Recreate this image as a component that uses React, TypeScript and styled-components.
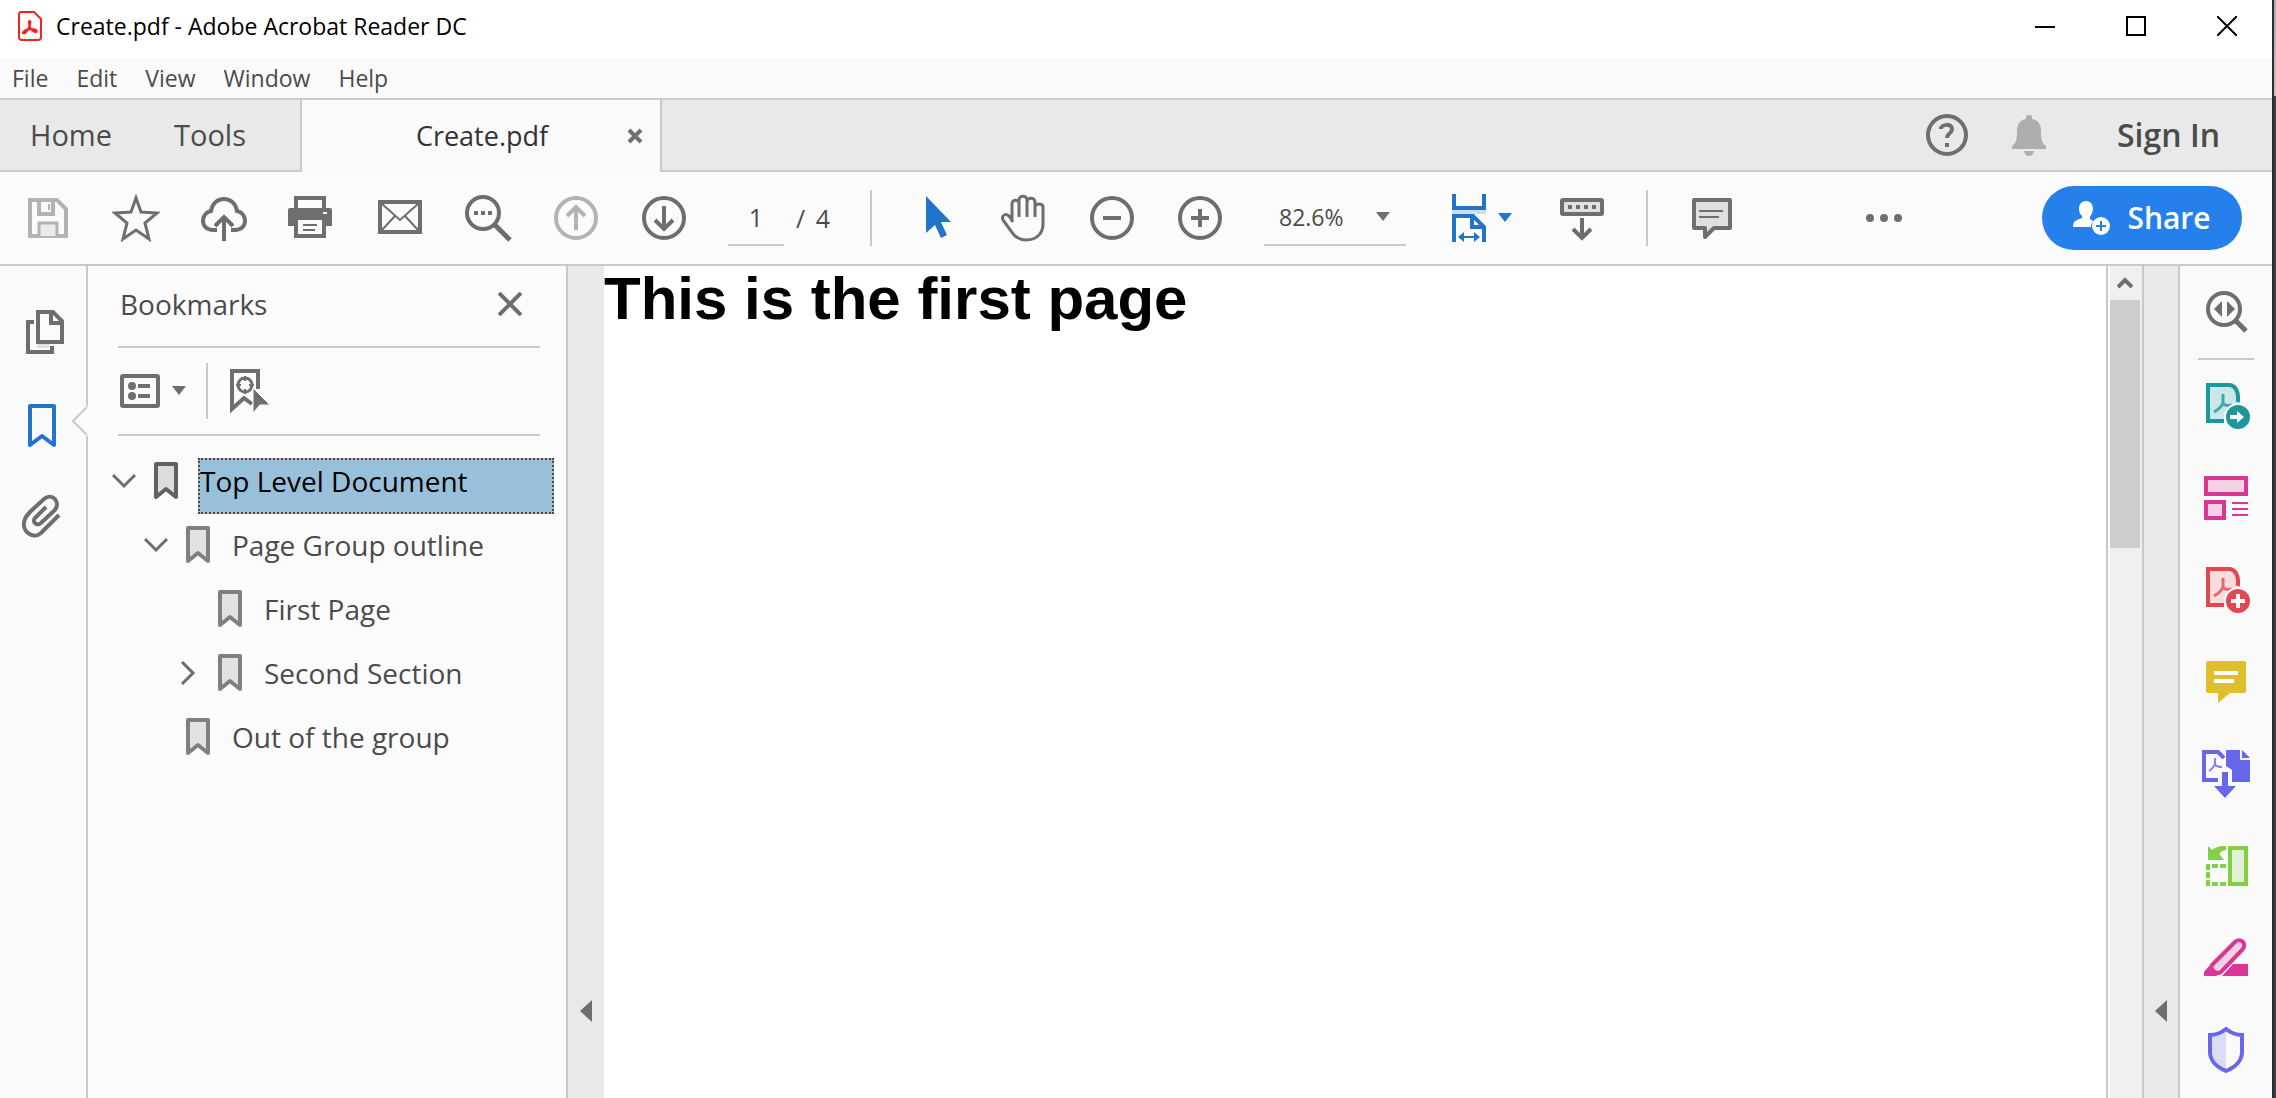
import React, { useState } from "react";
import styled, { createGlobalStyle, css } from "styled-components";

const color = {
  line: "#c9c9c9",
  chrome: "#fafafa",
  well: "#e9e9e9",
  icon: "#6e6e6e",
  iconOff: "#b3b3b3",
  text: "#4b4b4b",
  blue: "#2074ca",
  share: "#2680eb",
  select: "#99c0da",
  teal: "#1d979c",
  pink: "#da3795",
  red: "#e34850",
  yellow: "#dfbf2b",
  violet: "#6767ec",
  green: "#84d045",
};

const GlobalStyle = createGlobalStyle`
  * { box-sizing: border-box; }
  body {
    margin: 0;
    background: #ffffff;
    color: ${color.text};
    font-family: "Open Sans", "Noto Sans", sans-serif;
  }
  button, input, select { font: inherit; color: inherit; }
`;

/* ---------- frame ---------- */

const Desktop = styled.div`
  display: flex;
  height: 100vh;
  overflow: hidden;
`;

const Window = styled.div`
  display: flex;
  flex: 1;
  flex-direction: column;
  min-width: 0;
`;

const DesktopEdge = styled.div`
  width: 4px;
  border-left: 2px solid #2c2f31;
  background: linear-gradient(#a9adb2 0, #c4c4c4 96px, #3b4144 96px);
`;

const BareButton = styled.button`
  display: flex;
  align-items: center;
  justify-content: center;
  padding: 0;
  border: 0;
  background: none;
  cursor: pointer;
`;

/* ---------- title and menu ---------- */

const TitleBar = styled.header`
  display: flex;
  align-items: center;
  flex: 0 0 58px;
  padding: 0 0 6px 16px;
`;

const Title = styled.h1`
  flex: 1;
  margin: 0 0 0 12px;
  color: #000000;
  font-size: 23px;
  font-weight: 400;
  line-height: 32px;
`;

const CaptionButton = styled(BareButton)`
  width: 91px;
  height: 52px;
`;

const MenuBar = styled.nav`
  display: flex;
  align-items: center;
  flex: 0 0 42px;
  gap: 28px;
  padding: 0 12px;
  border-bottom: 2px solid ${color.line};
  background: ${color.chrome};
`;

const MenuItem = styled(BareButton)`
  font-size: 23px;
  line-height: 32px;
`;

/* ---------- tabs ---------- */

const TabBar = styled.div`
  display: flex;
  flex: 0 0 72px;
  background: ${color.well};
`;

const TabGroup = styled.div<{ $end?: boolean }>`
  display: flex;
  align-items: center;
  border-bottom: 2px solid ${color.line};
  ${(p) =>
    p.$end
      ? css`
          flex: 1;
          justify-content: flex-end;
          gap: 34px;
          padding-right: 52px;
        `
      : css`
          width: 300px;
          gap: 62px;
          padding-left: 30px;
        `}
`;

const TabButton = styled(BareButton)`
  font-size: 29px;
  line-height: 40px;
`;

const SignInButton = styled(BareButton)`
  padding-left: 30px;
  font-size: 32px;
  font-weight: 600;
  line-height: 40px;
`;

const OpenTab = styled.div`
  display: flex;
  align-items: center;
  width: 362px;
  padding: 0 16px 0 36px;
  border: solid ${color.line};
  border-width: 0 2px;
  background: ${color.chrome};
  color: #323232;
  font-size: 27px;
  line-height: 40px;
`;

const OpenTabName = styled.span`
  flex: 1;
  text-align: center;
`;

/* ---------- toolbar ---------- */

const Toolbar = styled.div`
  display: flex;
  align-items: center;
  flex: 0 0 94px;
  padding: 0 30px 0 4px;
  border-bottom: 2px solid ${color.line};
  background: #fbfbfb;
`;

const ToolButton = styled(BareButton)`
  flex: 0 0 88px;
  height: 64px;
`;

const FitButton = styled(BareButton)`
  gap: 12px;
  height: 64px;
  margin: 0 4px 0 46px;
  padding-right: 22px;
`;

const Divider = styled.span`
  width: 2px;
  height: 56px;
  margin: 0 20px;
  background: ${color.line};
`;

const PageField = styled.label`
  display: flex;
  align-items: center;
  gap: 12px;
  margin: 0 20px;
  font-size: 25px;
  line-height: 32px;
`;

const PageInput = styled.input`
  width: 56px;
  height: 56px;
  padding: 0;
  border: 0;
  border-bottom: 2px solid ${color.line};
  background: none;
  text-align: center;
`;

const PageCount = styled.span`
  display: flex;
  justify-content: space-between;
  width: 34px;
`;

const ZoomField = styled.label`
  display: flex;
  align-items: center;
  width: 142px;
  height: 56px;
  margin-left: 20px;
  padding-right: 16px;
  border-bottom: 2px solid ${color.line};
`;

const ZoomSelect = styled.select`
  flex: 1;
  min-width: 0;
  padding: 0 0 0 15px;
  border: 0;
  background: none;
  appearance: none;
  font-size: 23px;
  line-height: 32px;
`;

const MoreSlot = styled.div`
  display: flex;
  flex: 1;
  justify-content: space-between;
  align-items: center;
  padding-left: 84px;
`;

const ShareButton = styled(BareButton)`
  gap: 16px;
  width: 200px;
  height: 64px;
  border-radius: 32px;
  background: ${color.share};
  color: #ffffff;
  font-size: 30px;
  font-weight: 600;
  line-height: 40px;
`;

/* ---------- body ---------- */

const Body = styled.div`
  display: flex;
  flex: 1;
  min-height: 0;
`;

const Rail = styled.nav<{ $side: "left" | "right" }>`
  display: flex;
  flex-direction: column;
  align-items: center;
  background: ${color.chrome};
  ${(p) =>
    p.$side === "left"
      ? css`
          width: 88px;
          padding-top: 20px;
          border-right: 2px solid ${color.line};
        `
      : css`
          width: 94px;
          border-left: 2px solid ${color.line};
        `}
`;

const RailButton = styled(BareButton)`
  position: relative;
  flex: 0 0 92px;
  width: 100%;
`;

const RailRule = styled.span`
  flex: 0 0 2px;
  width: 56px;
  background: ${color.line};
`;

const Notch = styled.svg`
  position: absolute;
  right: -2px;
  top: 28px;
`;

const Panel = styled.aside`
  display: flex;
  flex-direction: column;
  width: 480px;
  padding: 0 12px 0 24px;
  border-right: 2px solid ${color.line};
  background: #fbfbfb;
`;

const PanelRow = styled.div`
  display: flex;
  align-items: center;
  margin: 0 14px 0 6px;
  padding-left: 2px;
  border-bottom: 2px solid ${color.line};
`;

const PanelHead = styled(PanelRow)`
  flex: 0 0 82px;
  justify-content: space-between;
  padding: 0 18px 4px 2px;
`;

const PanelTools = styled(PanelRow)`
  flex: 0 0 88px;
`;

const PanelTitle = styled.h2`
  margin: 0;
  font-size: 28px;
  font-weight: 400;
  line-height: 40px;
`;

const OptionsButton = styled(BareButton)`
  gap: 12px;
`;

const Tree = styled.ul`
  margin: 0;
  padding: 13px 0 0;
  list-style: none;
`;

const TreeRow = styled.li<{ $level: number }>`
  display: flex;
  align-items: center;
  height: 64px;
  padding-left: ${(p) => p.$level * 32}px;
`;

const Twisty = styled(BareButton)`
  width: 24px;
  height: 24px;
  margin-right: 18px;
`;

const TwistySpace = styled.span`
  width: 42px;
`;

const TreeLabel = styled.button<{ $selected: boolean }>`
  flex: 1;
  height: 56px;
  margin: 10px 0 0 20px;
  padding: 0 0 10px;
  border: 2px dotted ${(p) => (p.$selected ? "#6b4028" : "transparent")};
  background: ${(p) => (p.$selected ? color.select : "transparent")};
  color: ${(p) => (p.$selected ? "#000000" : color.text)};
  font-size: 28px;
  line-height: 40px;
  text-align: left;
  cursor: pointer;
`;

const Collapser = styled(BareButton)<{ $wide?: boolean }>`
  flex: 0 0 ${(p) => (p.$wide ? 36 : 34)}px;
  align-items: flex-end;
  padding-bottom: 76px;
  background: ${color.well};
`;

const Document = styled.main`
  flex: 1;
  min-width: 0;
  border-right: 2px solid ${color.line};
  background: #ffffff;
`;

const Heading = styled.h2`
  margin: 0;
  color: #000000;
  font: bold 60px/66px "Liberation Sans", Arial, sans-serif;
`;

const ScrollTrack = styled.div`
  width: 36px;
  padding-right: 2px;
  border: solid ${color.line};
  border-width: 0 2px 0 0;
  border-left: 2px solid #ffffff;
  background: #f0f0f0;
`;

const ScrollUp = styled(BareButton)`
  width: 30px;
  height: 34px;
`;

const ScrollThumb = styled.div`
  width: 30px;
  height: 248px;
  background: #cdcdcd;
`;

/* ---------- drawings ---------- */

type IconProps = {
  size?: number;
  stroke?: string;
  width?: number;
  children: React.ReactNode;
};

const Icon = ({ size = 48, stroke = color.icon, width = 4, children }: IconProps) => (
  <svg
    width={size}
    height={size}
    viewBox={`0 0 ${size} ${size}`}
    fill="none"
    stroke={stroke}
    strokeWidth={width}
    aria-hidden="true"
  >
    {children}
  </svg>
);

const Caret = ({ fill = color.icon }: { fill?: string }) => (
  <svg width="14" height="10" viewBox="0 0 14 10" fill={fill} aria-hidden="true">
    <path d="M0 0h14L7 9z" />
  </svg>
);

const CollapseMark = () => (
  <svg width="12" height="22" viewBox="0 0 12 22" fill={color.icon} aria-hidden="true">
    <path d="M12 0v22L0 11z" />
  </svg>
);

const SaveIcon = () => (
  <Icon stroke={color.iconOff}>
    <path d="M6 6h27l9 9v27H6z" />
    <path d="M15 6v14h14V6" />
    <path d="M25 10v6" strokeWidth="2" />
    <path d="M15 42V29h18v13" fill="#ebebeb" strokeWidth="3" />
  </Icon>
);
const StarIcon = () => (
  <Icon width={3}>
    <path d="M24 4L29 18 45 19 33 29 37 45 24 36 11 45 15 29 3 19 19 18z" />
  </Icon>
);
const CloudIcon = () => (
  <Icon>
    <path d="M17 36h-4C7 36 3 32 3 27s3-9 8-10C12 10 17 5 24 5s12 5 13 12c5 1 8 5 8 10s-4 9-10 9h-4" />
    <path d="M24 47V24M15 32l9-9 9 9" />
  </Icon>
);
const PrintIcon = () => (
  <Icon>
    <path d="M8 16V4h28v12" />
    <path d="M2 14h40q2 0 2 2v16H0V16q0-2 2-2z" fill={color.icon} stroke="none" />
    <path d="M8 24h28v18H8z" fill="#fbfbfb" />
    <path d="M15 31h14M15 36h12" strokeWidth="2" />
    <path d="M35 19h4" stroke="#fbfbfb" strokeWidth="2" />
  </Icon>
);
const MailIcon = () => (
  <Icon>
    <path d="M4 8h40v30H4z" />
    <path d="M5 9l19 17L43 9M5 37l14-15M43 37L29 22" strokeWidth="2" />
  </Icon>
);
const FindIcon = () => (
  <Icon>
    <circle cx="19" cy="19" r="16" />
    <path d="M31 31l15 15" strokeWidth="5" />
    <path d="M10 19h4m3 0h4m3 0h4" />
  </Icon>
);
const ArrowCircle = ({ up }: { up?: boolean }) => (
  <Icon stroke={up ? color.iconOff : color.icon}>
    <circle cx="24" cy="24" r="20" />
    <path d={up ? "M24 36V14M15 22l9-9 9 9" : "M24 12v22M15 26l9 9 9-9"} />
  </Icon>
);
const CursorIcon = () => (
  <Icon stroke="none">
    <path d="M14 2l25 26h-10l6 13-6 3-6-13-9 8z" fill={color.blue} />
  </Icon>
);
const HandIcon = () => (
  <Icon width={3}>
    <path d="M12 28V10c0-5 7-5 7 0v13M19 11V6c0-5 8-5 8 0v17M27 8c0-5 8-5 8 0v15M35 13c0-4 8-4 8 0v17c0 10-7 16-17 16-8 0-12-4-15-9L3 26c-2-5 3-7 6-4l4 6" />
  </Icon>
);
const ZoomCircle = ({ plus }: { plus?: boolean }) => (
  <Icon>
    <circle cx="24" cy="24" r="20" />
    <path d={plus ? "M15 24h18M24 15v18" : "M15 24h18"} />
  </Icon>
);
const FitIcon = () => (
  <svg width="34" height="48" viewBox="0 0 34 48" fill="none" stroke={color.blue} strokeWidth="4" aria-hidden="true">
    <path d="M2 0v14h30V0" />
    <path d="M0 18h34" stroke="#cfdff1" />
    <path d="M2 48V22h19l11 11v15" />
    <path d="M20 22v11h12" />
    <path d="M8 43h18" strokeWidth="2" />
    <path d="M6 43l6-5v10zM28 43l-6-5v10z" fill={color.blue} stroke="none" />
  </svg>
);
const KeyboardIcon = () => (
  <Icon>
    <rect x="4" y="6" width="40" height="14" rx="1" fill="#e0e0e0" />
    <path d="M10 13h4m4 0h4m4 0h4m4 0h4" />
    <path d="M24 24v20M15 35l9 9 9-9" />
  </Icon>
);
const CommentIcon = () => (
  <Icon>
    <path d="M6 6h36v28H26l-9 9v-9H6z" fill="#e0e0e0" strokeLinejoin="round" />
    <path d="M11 17h24M11 23h20" strokeWidth="2" />
  </Icon>
);
const MoreIcon = () => (
  <Icon stroke="none">
    <g fill={color.icon}>
      <circle cx="10" cy="24" r="4" />
      <circle cx="24" cy="24" r="4" />
      <circle cx="38" cy="24" r="4" />
    </g>
  </Icon>
);
const ShareIcon = () => (
  <svg width="38" height="36" viewBox="0 0 38 36" fill="#ffffff" aria-hidden="true">
    <path d="M13 1c5 0 7 4 7 8 0 3-2 6-3 8v2c1 1 3 2 4 2-3 2-3 4-3 6H0c0-6 3-7 9-9v-2C7 14 6 12 6 9c0-4 2-8 7-8z" />
    <circle cx="28" cy="26" r="9" />
    <path d="M23 26h10M28 21v10" stroke={color.share} strokeWidth="2" />
  </svg>
);
const HelpIcon = () => (
  <Icon>
    <circle cx="24" cy="24" r="19" />
    <path d="M18 18c0-5 11-6 11 0 0 5-5 4-5 9M24 32v4" />
  </Icon>
);
const BellIcon = () => (
  <Icon stroke="none">
    <path d="M21 6q0-2 3-2t3 2v2c6 1 9 5 9 12 0 9 1 12 5 15v3H7v-3c4-3 5-6 5-15 0-7 3-11 9-12zM19 40h10q-1 5-5 5t-5-5z" fill="#aeaeae" />
  </Icon>
);
const PdfFileIcon = () => (
  <svg width="28" height="32" viewBox="0 0 28 32" fill="none" stroke="#f8221a" strokeWidth="2" aria-hidden="true">
    <path d="M5 2h13l7 7v18q0 3-3 3H6q-3 0-3-3V5q0-3 2-3z" />
    <path d="M14 11c-2 0-1 4 0 6 1 3 4 5 6 5 2-1 0-3-5-3-4 0-8 2-8 4 2 2 5-3 6-6 1-2 2-6 1-6z" />
  </svg>
);

const PagesIcon = () => (
  <Icon>
    <path d="M15 14H9v30h24v-6" />
    <path d="M19 4h15l9 9v21H19z" fill="#fbfbfb" />
    <path d="M32 4v11h11" />
    <path d="M18 38h12" stroke="#e0e0e0" />
  </Icon>
);
const RailBookmarkIcon = () => (
  <Icon stroke={color.blue}>
    <path d="M11 6h24v39L23 36 11 45z" strokeLinejoin="round" />
  </Icon>
);
const ClipIcon = () => (
  <Icon>
    <path d="M40 23L22 41C14 48 1 39 6 27c1-3 3-5 6-8L25 7c8-7 17 3 11 11L22 31c-5 4-9-2-6-5l11-11" />
  </Icon>
);

const BookmarkIcon = ({ dark }: { dark?: boolean }) => (
  <svg width="24" height="38" viewBox="0 0 24 38" fill={dark ? "#dcdcdc" : "#e2e2e2"} stroke={dark ? "#616161" : "#808080"} strokeWidth="4" aria-hidden="true">
    <path d="M2 2h20v33l-10-8-10 8z" strokeLinejoin="round" />
  </svg>
);
const OptionsIcon = () => (
  <svg width="40" height="34" viewBox="0 0 40 34" fill="none" stroke={color.icon} strokeWidth="4" aria-hidden="true">
    <rect x="2" y="2" width="36" height="30" rx="1" />
    <path d="M18 12h12M18 22h12" />
    <circle cx="12" cy="12" r="4" fill={color.icon} stroke="none" />
    <circle cx="12" cy="22" r="4" fill={color.icon} stroke="none" />
  </svg>
);
const FindBookmarkIcon = () => (
  <Icon>
    <path d="M30 22V4H4v38l12-11 8 6" />
    <circle cx="17" cy="18" r="7" strokeWidth="3" />
    <path d="M17 9v5m0 8v5M8 18h5m8 0h5" strokeWidth="2" />
    <path d="M25 21l17 17H32l-7 8z" fill={color.icon} stroke="#fbfbfb" strokeWidth="1" />
  </Icon>
);
const Chevron = ({ open }: { open: boolean }) => (
  <Icon size={24} width={3}>
    <path d={open ? "M1 6l11 11L23 6" : "M6 1l11 11L6 23"} />
  </Icon>
);
const CloseIcon = () => (
  <Icon size={24}>
    <path d="M1 1l22 22M23 1L1 23" />
  </Icon>
);

const Badged = ({ tint, wash, children }: { tint: string; wash: string; children: React.ReactNode }) => (
  <Icon stroke={tint}>
    <path d="M22 39H6V3h23l9 9v9" fill={wash} stroke="none" />
    <path d="M22 39H6V3h22q9 2 8 17" />
    <path d="M21 12v9c-1 4-4 6-9 9M21 21c2 3 5 3 9 2" strokeWidth="3" opacity="0.8" />
    <circle cx="36" cy="35" r="13" fill={tint} stroke={color.chrome} strokeWidth="2" />
    {children}
  </Icon>
);
const ExportIcon = () => (
  <Badged tint={color.teal} wash="#cde7e8">
    <path d="M28 33h7v-4l7 6-7 6v-4h-7z" fill="#ffffff" stroke="none" />
  </Badged>
);
const CreateIcon = () => (
  <Badged tint={color.red} wash="#f8dcde">
    <path d="M29 35h14M36 28v14" stroke="#ffffff" />
  </Badged>
);
const FindToolIcon = () => (
  <Icon>
    <circle cx="22" cy="21" r="16" />
    <path d="M33 32l11 11" strokeWidth="5" />
    <path d="M20 13v16l-8-8zM25 13v16l8-8z" fill={color.icon} stroke="none" />
  </Icon>
);
const EditIcon = () => (
  <Icon stroke={color.pink}>
    <g fill="#f4d2e5">
      <rect x="4" y="4" width="40" height="16" />
      <rect x="4" y="28" width="18" height="16" />
    </g>
    <path d="M30 29h16M30 35h16M30 41h16" strokeWidth="2" />
  </Icon>
);
const NoteIcon = () => (
  <Icon stroke="none">
    <path d="M6 3h36q2 0 2 2v28q0 2-2 2H28L16 45V35H6q-2 0-2-2V5q0-2 2-2z" fill={color.yellow} />
    <path d="M12 15h24M12 23h20" stroke="#ffffff" strokeWidth="4" />
  </Icon>
);
const CombineIcon = () => (
  <Icon stroke={color.violet}>
    <path d="M16 30H2V2h14l6 6" />
    <path d="M13 8v6c-1 3-3 5-6 7M13 15c2 2 4 2 7 2" strokeWidth="2" opacity="0.8" />
    <path d="M24 0h14v10h10v22H30V20l-6-4zM40 0l8 8h-8z" fill={color.violet} stroke="none" />
    <path d="M20 22h6v14h8L23 48 12 36h8z" fill={color.violet} stroke="none" />
  </Icon>
);
const OrganizeIcon = () => (
  <Icon stroke={color.green}>
    <rect x="28" y="6" width="16" height="36" fill="#e3f0d8" />
    <path d="M4 24h4m2 0h6m2 0h6M4 42h4m2 0h6m2 0h6M6 22v6m0 2v6m0 2v6" />
    <path d="M6 4l4 4c5-4 9-4 14-4v4c-5 1-7 3-6 5l4 5H6z" fill={color.green} stroke="none" />
  </Icon>
);
const RedactIcon = () => (
  <Icon stroke={color.pink}>
    <path d="M10 31L33 8c5-5 12 1 8 7L19 38c-5 3-12-3-9-7z" fill="#f4d2e5" />
    <path d="M2 42v-4l5-6 9 9-2 1zM20 42l11-12h15v12z" fill={color.pink} stroke="none" />
  </Icon>
);
const ShieldIcon = () => (
  <Icon stroke={color.violet}>
    <path d="M24 3v42C14 40 8 34 8 26V9c7 0 11-2 16-6z" fill="#dcdcf8" stroke="none" />
    <path d="M24 3c5 4 9 6 16 6v17c0 8-6 15-16 19C14 41 8 34 8 26V9c7 0 11-2 16-6z" />
  </Icon>
);

/* ---------- data ---------- */

type Bookmark = { title: string; level: number; open?: boolean };

const bookmarks: Bookmark[] = [
  { title: "Top Level Document", level: 0, open: true },
  { title: "Page Group outline", level: 1, open: true },
  { title: "First Page", level: 2 },
  { title: "Second Section", level: 2, open: false },
  { title: "Out of the group", level: 1 },
];

const fileTools: [string, React.ReactNode][] = [
  ["Save", <SaveIcon />],
  ["Star", <StarIcon />],
  ["Upload", <CloudIcon />],
  ["Print", <PrintIcon />],
  ["Email", <MailIcon />],
  ["Find", <FindIcon />],
  ["Previous page", <ArrowCircle up />],
  ["Next page", <ArrowCircle />],
];

const viewTools: [string, React.ReactNode][] = [
  ["Select", <CursorIcon />],
  ["Pan", <HandIcon />],
  ["Zoom out", <ZoomCircle />],
  ["Zoom in", <ZoomCircle plus />],
];

const sideTools: [string, React.ReactNode][] = [
  ["Export PDF", <ExportIcon />],
  ["Edit PDF", <EditIcon />],
  ["Create PDF", <CreateIcon />],
  ["Comment", <NoteIcon />],
  ["Combine files", <CombineIcon />],
  ["Organize pages", <OrganizeIcon />],
  ["Redact", <RedactIcon />],
  ["Protect", <ShieldIcon />],
];

/* ---------- application ---------- */

export default function App() {
  const [selected, setSelected] = useState(0);
  const [page, setPage] = useState("1");

  return (
    <Desktop>
      <GlobalStyle />
      <Window>
        <TitleBar>
          <PdfFileIcon />
          <Title>Create.pdf - Adobe Acrobat Reader DC</Title>
          <CaptionButton aria-label="Minimize">
            <Icon size={20} stroke="#000" width={2}><path d="M0 11h20" /></Icon>
          </CaptionButton>
          <CaptionButton aria-label="Maximize">
            <Icon size={20} stroke="#000" width={2}><path d="M1 1h18v18H1z" /></Icon>
          </CaptionButton>
          <CaptionButton aria-label="Close">
            <Icon size={20} stroke="#000" width={2}><path d="M0 0l20 20M20 0L0 20" /></Icon>
          </CaptionButton>
        </TitleBar>

        <MenuBar>
          {["File", "Edit", "View", "Window", "Help"].map((name) => (
            <MenuItem key={name}>{name}</MenuItem>
          ))}
        </MenuBar>

        <TabBar>
          <TabGroup>
            <TabButton>Home</TabButton>
            <TabButton>Tools</TabButton>
          </TabGroup>
          <OpenTab>
            <OpenTabName>Create.pdf</OpenTabName>
            <BareButton aria-label="Close tab">
              <Icon size={18}><path d="M3 3l12 12M15 3L3 15" /></Icon>
            </BareButton>
          </OpenTab>
          <TabGroup $end>
            <BareButton aria-label="Help"><HelpIcon /></BareButton>
            <BareButton aria-label="Notifications"><BellIcon /></BareButton>
            <SignInButton>Sign In</SignInButton>
          </TabGroup>
        </TabBar>

        <Toolbar>
          {fileTools.map(([name, icon]) => (
            <ToolButton key={name} aria-label={name}>{icon}</ToolButton>
          ))}
          <PageField>
            <PageInput aria-label="Page number" value={page} onChange={(e) => setPage(e.target.value)} />
            <PageCount>
              <span>/</span>
              <span>4</span>
            </PageCount>
          </PageField>
          <Divider />
          {viewTools.map(([name, icon]) => (
            <ToolButton key={name} aria-label={name}>{icon}</ToolButton>
          ))}
          <ZoomField>
            <ZoomSelect aria-label="Zoom level">
              <option>82.6%</option>
            </ZoomSelect>
            <Caret />
          </ZoomField>
          <FitButton aria-label="Fit to width">
            <FitIcon />
            <Caret fill={color.blue} />
          </FitButton>
          <ToolButton aria-label="Read mode"><KeyboardIcon /></ToolButton>
          <Divider />
          <ToolButton aria-label="Add comment"><CommentIcon /></ToolButton>
          <MoreSlot>
            <ToolButton aria-label="More tools"><MoreIcon /></ToolButton>
            <ShareButton>
              <ShareIcon />
              Share
            </ShareButton>
          </MoreSlot>
        </Toolbar>

        <Body>
          <Rail $side="left" aria-label="Navigation panes">
            <RailButton aria-label="Page thumbnails"><PagesIcon /></RailButton>
            <RailButton aria-label="Bookmarks">
              <RailBookmarkIcon />
              <Notch width="16" height="30" viewBox="0 0 16 30" fill="#fbfbfb" stroke={color.line} strokeWidth="2" aria-hidden="true">
                <path d="M14 0h2v30h-2z" stroke="none" />
                <path d="M15 1L1 15l14 14" />
              </Notch>
            </RailButton>
            <RailButton aria-label="Attachments"><ClipIcon /></RailButton>
          </Rail>

          <Panel>
            <PanelHead>
              <PanelTitle>Bookmarks</PanelTitle>
              <BareButton aria-label="Close panel"><CloseIcon /></BareButton>
            </PanelHead>
            <PanelTools>
              <OptionsButton aria-label="Options">
                <OptionsIcon />
                <Caret />
              </OptionsButton>
              <Divider />
              <BareButton aria-label="Find current bookmark"><FindBookmarkIcon /></BareButton>
            </PanelTools>
            <Tree>
              {bookmarks.map((b, i) => (
                <TreeRow key={b.title} $level={b.level}>
                  {b.open === undefined ? (
                    <TwistySpace />
                  ) : (
                    <Twisty aria-label={b.open ? "Collapse" : "Expand"}>
                      <Chevron open={b.open} />
                    </Twisty>
                  )}
                  <BookmarkIcon dark={i === selected} />
                  <TreeLabel $selected={i === selected} onClick={() => setSelected(i)}>
                    {b.title}
                  </TreeLabel>
                </TreeRow>
              ))}
            </Tree>
          </Panel>

          <Collapser $wide aria-label="Hide navigation pane"><CollapseMark /></Collapser>

          <Document>
            <Heading>This is the first page</Heading>
          </Document>

          <ScrollTrack>
            <ScrollUp aria-label="Scroll up">
              <Icon size={16} width={4}><path d="M1 12l7-7 7 7" /></Icon>
            </ScrollUp>
            <ScrollThumb />
          </ScrollTrack>

          <Collapser aria-label="Hide tools pane"><CollapseMark /></Collapser>

          <Rail $side="right" aria-label="Tools">
            <RailButton aria-label="Search tools"><FindToolIcon /></RailButton>
            <RailRule />
            {sideTools.map(([name, icon]) => (
              <RailButton key={name} aria-label={name}>{icon}</RailButton>
            ))}
          </Rail>
        </Body>
      </Window>
      <DesktopEdge />
    </Desktop>
  );
}
